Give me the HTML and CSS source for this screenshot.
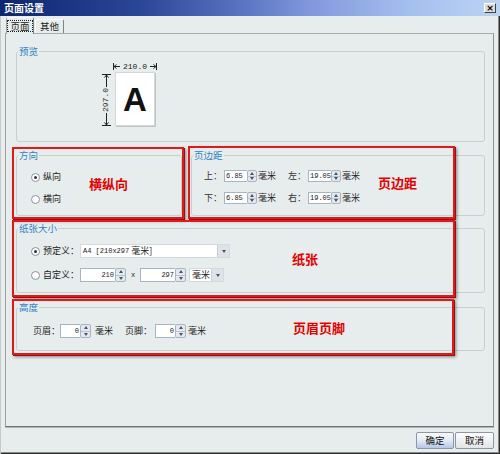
FILE: index.html
```html
<!DOCTYPE html>
<html lang="zh-CN">
<head>
<meta charset="utf-8">
<title>页面设置</title>
<link rel="stylesheet" href="styles.css">
</head>
<body>
<div class="window">
  <div class="titlebar">
    <span class="title">页面设置</span>
    <span class="close">×</span>
  </div>
  <div class="tabs">
    <div class="tab active"><span class="focus">页面</span></div>
    <div class="tab">其他</div>
  </div>
  <div class="panel">
    <fieldset class="group g-preview">
      <legend>预览</legend>
      <div class="preview">
        <div class="wlabel">
          <svg width="7" height="7" viewBox="0 0 7 7"><path d="M0.5 0V7M1 3.5H7M1 3.5L3.5 1.5M1 3.5L3.5 5.5" stroke="#222" fill="none"/></svg>
          <span class="dim">210.0</span>
          <svg width="7" height="7" viewBox="0 0 7 7"><path d="M6.5 0V7M6 3.5H0M6 3.5L3.5 1.5M6 3.5L3.5 5.5" stroke="#222" fill="none"/></svg>
        </div>
        <div class="hlabel">
          <svg width="9" height="7" viewBox="0 0 9 7"><path d="M0 0.5H9M4.5 1V7M4.5 1L2.5 3.5M4.5 1L6.5 3.5" stroke="#222" fill="none"/></svg>
          <span class="vline"></span>
          <span class="vdim">297.0</span>
          <span class="vline"></span>
          <svg width="9" height="7" viewBox="0 0 9 7"><path d="M0 6.5H9M4.5 6V0M4.5 6L2.5 3.5M4.5 6L6.5 3.5" stroke="#222" fill="none"/></svg>
        </div>
        <div class="page">A</div>
      </div>
    </fieldset>

    <div class="split">
      <fieldset class="group g-dir">
        <legend>方向</legend>
        <div class="body dir-body">
          <div class="opt"><span class="radio on"></span><span class="otext">纵向</span></div>
          <div class="opt"><span class="radio"></span><span class="otext">横向</span></div>
        </div>
      </fieldset>
      <fieldset class="group g-margin">
        <legend>页边距</legend>
        <div class="body margin-body">
          <div class="mrow">
            <span class="lbl">上：</span>
            <span class="spin"><span class="field">6.85</span><span class="arrows"><i class="up"></i><i class="down"></i></span></span>
            <span class="unit">毫米</span>
            <span class="lbl lbl2">左：</span>
            <span class="spin"><span class="field">19.05</span><span class="arrows"><i class="up"></i><i class="down"></i></span></span>
            <span class="unit">毫米</span>
          </div>
          <div class="mrow">
            <span class="lbl">下：</span>
            <span class="spin"><span class="field">6.85</span><span class="arrows"><i class="up"></i><i class="down"></i></span></span>
            <span class="unit">毫米</span>
            <span class="lbl lbl2">右：</span>
            <span class="spin"><span class="field">19.05</span><span class="arrows"><i class="up"></i><i class="down"></i></span></span>
            <span class="unit">毫米</span>
          </div>
        </div>
      </fieldset>
    </div>

    <fieldset class="group g-paper">
      <legend>纸张大小</legend>
      <div class="body paper-body">
        <div class="prow">
          <span class="radio on"></span><span class="plbl">预定义：</span>
          <span class="select wide"><span class="val"><span class="mono">A4 [210x297</span> 毫米]</span><span class="sbtn"></span></span>
        </div>
        <div class="prow">
          <span class="radio"></span><span class="plbl">自定义：</span>
          <span class="spin tall"><span class="field right w35">210</span><span class="arrows"><i class="up"></i><i class="down"></i></span></span>
          <span class="times">x</span>
          <span class="spin tall"><span class="field right w35">297</span><span class="arrows"><i class="up"></i><i class="down"></i></span></span>
          <span class="select small"><span class="val">毫米</span><span class="sbtn"></span></span>
        </div>
      </div>
    </fieldset>

    <fieldset class="group g-head">
      <legend>高度</legend>
      <div class="body head-body">
        <div class="hrow">
          <span class="hlbl">页眉：</span>
          <span class="spin tall"><span class="field right w20">0</span><span class="arrows"><i class="up"></i><i class="down"></i></span></span>
          <span class="unit hunit">毫米</span>
          <span class="hlbl hlbl2">页脚：</span>
          <span class="spin tall"><span class="field right w20">0</span><span class="arrows"><i class="up"></i><i class="down"></i></span></span>
          <span class="unit hunit2">毫米</span>
        </div>
      </div>
    </fieldset>
  </div>

  <div class="buttons">
    <span class="btn default">确定</span>
    <span class="btn">取消</span>
  </div>

  <div class="mark m-dir"><span>横纵向</span></div>
  <div class="mark m-margin"><span>页边距</span></div>
  <div class="mark m-paper"><span>纸张</span></div>
  <div class="mark m-head"><span>页眉页脚</span></div>
</div>
</body>
</html>
```

FILE: styles.css
```css
* { box-sizing: border-box; }
html, body { margin: 0; padding: 0; }
body {
  width: 500px;
  height: 454px;
  overflow: hidden;
  font-family: "Noto Sans CJK SC", "Noto Sans", sans-serif;
  font-size: 9px;
  line-height: 12px;
  color: #222;
  background: #e7eded;
}
span, legend { white-space: nowrap; }
.window {
  position: relative;
  width: 500px;
  height: 454px;
  display: flex;
  flex-direction: column;
  background: #e7eded;
  box-shadow: inset 1px 0 #c4caca, inset -1px -1px #2c2c2c, inset -2px -2px #8a8a8a;
}

/* title bar */
.titlebar {
  height: 16px;
  flex: none;
  display: flex;
  align-items: center;
  justify-content: space-between;
  padding: 0 4px 0 4px;
  background: linear-gradient(to right, #0c2670 0%, #2a4696 28%, #5d78c4 50%, #8098dc 62%, #a4c0ee 82%, #bcd4f2 100%);
}
.title {
  color: #fff;
  font-weight: bold;
  font-size: 10px;
  line-height: 12px;
}
.close {
  width: 12px;
  height: 10px;
  background: #dcdcdc;
  border: 1px solid;
  border-color: #fff #404040 #404040 #fff;
  font: bold 9px/8px "DejaVu Sans", sans-serif;
  text-align: center;
  color: #000;
}

/* tabs */
.tabs {
  height: 17px;
  flex: none;
  display: flex;
  align-items: flex-end;
  padding-left: 6px;
  position: relative;
  z-index: 1;
}
.tab {
  width: 29px;
  height: 14px;
  display: flex;
  align-items: center;
  justify-content: center;
  background: #e7eded;
  border: 1px solid;
  border-color: #fafafa #7c8484 transparent #fafafa;
  border-bottom: none;
  border-radius: 2px 2px 0 0;
  font-size: 9.5px;
  line-height: 11px;
}
.tab.active {
  width: 28px;
  height: 17px;
  margin-bottom: -1px;
  margin-right: 1px;
  border-color: #fafafa #7c8484 transparent #9aa4a4;
}
.focus {
  border: 1px dotted #222;
  padding: 0 2px;
  line-height: 10px;
}

/* main panel */
.panel {
  flex: none;
  height: 394px;
  margin: 0 6px 0 5px;
  border: 1px solid;
  border-color: #a4aeae #8a9292 #6e7474 #9aa4a4;
  box-shadow: 0 1px 0 #b0b6b6;
  padding: 0 8px 0 10px;
}

/* groups */
fieldset.group {
  margin: 0;
  padding: 0;
  min-width: 0;
  border: 1px solid #c6d0d0;
  border-radius: 3px;
}
legend {
  margin-left: 1px;
  padding: 0 1px;
  font-size: 9.5px;
  line-height: 12px;
  color: #2f82c8;
}
.g-preview { margin-top: 11px !important; height: 97px; }
.split {
  display: flex;
  gap: 9px;
  margin-top: 7px;
}
.g-dir { width: 166px; height: 67px; flex: none; }
.g-margin { flex: 1; height: 67px; }
.g-paper { margin-top: 6px !important; height: 71px; }
.g-head { margin-top: 8px !important; height: 50px; }

/* preview */
.preview {
  display: grid;
  grid-template-columns: 10px 40px;
  grid-template-rows: 9px 54px;
  column-gap: 4px;
  padding: 6px 0 0 84px;
}
.wlabel {
  grid-column: 2;
  grid-row: 1;
  margin: 0 -2px;
  height: 7px;
  display: flex;
  align-items: center;
  justify-content: space-between;
}
.dim {
  font: 8px/7px "Liberation Mono", monospace;
  color: #222;
}
.hlabel {
  grid-column: 1;
  grid-row: 2;
  display: flex;
  flex-direction: column;
  align-items: center;
  padding-top: 2px;
}
.vline {
  flex: 1;
  width: 1px;
  background: #222;
}
.vdim {
  writing-mode: vertical-rl;
  transform: rotate(180deg);
  font: 8px/8px "Liberation Mono", monospace;
  color: #222;
  padding: 1px 0;
}
.page {
  grid-column: 2;
  grid-row: 2;
  width: 40px;
  height: 54px;
  background: #fff;
  border: 1px solid #d4d8d8;
  box-shadow: 1px 1px 0 #bfc4c4;
  display: flex;
  align-items: center;
  justify-content: center;
  font: bold 33px/1 "Liberation Sans", Arial, sans-serif;
  color: #111;
}

/* direction */
.dir-body {
  padding: 10px 0 0 14px;
  display: flex;
  flex-direction: column;
  gap: 10px;
}
.opt {
  display: flex;
  align-items: center;
  height: 12px;
  gap: 3px;
}
.radio {
  width: 9px;
  height: 9px;
  flex: none;
  border-radius: 50%;
  border: 1px solid #8494a4;
  background: #fff;
  display: flex;
  align-items: center;
  justify-content: center;
}
.radio.on::after {
  content: "";
  width: 3px;
  height: 3px;
  border-radius: 50%;
  background: #333;
}

/* spin boxes */
.spin {
  display: flex;
  height: 12px;
  flex: none;
}
.spin.tall { height: 14px; }
.field {
  width: 23px;
  background: #fff;
  border: 1px solid #a6b6c6;
  border-right: none;
  padding: 0 1px;
  overflow: hidden;
  white-space: nowrap;
  display: flex;
  align-items: center;
  font: 7px/1 "Liberation Mono", monospace;
  color: #222;
}
.field.right { justify-content: flex-end; }
.field.w35 { width: 35px; }
.field.w20 { width: 20px; }
.arrows {
  width: 10px;
  display: flex;
  flex-direction: column;
  border: 1px solid #a6b6c6;
  border-radius: 2px;
  background: #e2e8ee;
}
.spin.tall .arrows { width: 11px; }
.arrows i {
  flex: 1;
  display: flex;
  align-items: center;
  justify-content: center;
}
.arrows i + i { border-top: 1px solid #b8c4d0; }
.arrows .up::before {
  content: "";
  border-left: 2.5px solid transparent;
  border-right: 2.5px solid transparent;
  border-bottom: 3px solid #4a5460;
}
.arrows .down::before {
  content: "";
  border-left: 2.5px solid transparent;
  border-right: 2.5px solid transparent;
  border-top: 3px solid #4a5460;
}

/* margins */
.margin-body {
  padding: 9px 0 0 12px;
  display: flex;
  flex-direction: column;
  gap: 10px;
}
.mrow {
  display: flex;
  align-items: center;
  height: 12px;
}
.lbl { width: 20px; color: #333; }
.lbl2 { margin-left: 12px; }
.unit { width: 18px; margin-left: 1px; }

/* paper */
.paper-body {
  padding: 10px 0 0 14px;
  display: flex;
  flex-direction: column;
  gap: 10px;
}
.prow {
  display: flex;
  align-items: center;
  height: 14px;
}
.plbl { width: 37px; margin-left: 3px; }
.select {
  display: flex;
  height: 14px;
  background: #fff;
  border: 1px solid #d2dae0;
}
.select.wide { width: 150px; }
.select.small { width: 35px; margin-left: 3px; }
.select .val {
  flex: 1;
  padding-left: 2px;
  display: flex;
  align-items: center;
  white-space: nowrap;
  overflow: hidden;
  color: #222;
}
.mono {
  font: 7px/1 "Liberation Mono", monospace;
  margin-right: 2px;
}
.sbtn {
  width: 12px;
  flex: none;
  background: #dde3e8;
  border-left: 1px solid #c8d0d8;
  display: flex;
  align-items: center;
  justify-content: center;
}
.sbtn::after {
  content: "";
  border-left: 2.5px solid transparent;
  border-right: 2.5px solid transparent;
  border-top: 3px solid #4a5460;
}
.times {
  width: 6px;
  margin: 0 4px;
  font: 7px/1 "Liberation Mono", monospace;
  text-align: center;
}

/* header / footer */
.head-body { padding: 11px 0 0 16px; }
.hrow {
  display: flex;
  align-items: center;
  height: 14px;
}
.hlbl { width: 27px; }
.hlbl2 { width: 30px; margin-left: 12px; }
.hunit { margin-left: 4px; }
.hunit2 { margin-left: 2px; }

/* buttons */
.buttons {
  flex: none;
  display: flex;
  justify-content: flex-end;
  gap: 1px;
  margin-top: 5px;
  padding-right: 6px;
}
.btn {
  width: 39px;
  height: 17px;
  border: 1px solid #8c98a4;
  border-radius: 2px;
  background: linear-gradient(#fdfdfd, #e2e4e6);
  text-align: center;
  font-size: 9.5px;
  line-height: 15px;
  color: #111;
}
.btn.default {
  width: 38px;
  background: linear-gradient(#f6f8fa 0%, #e6edf6 45%, #b4c8e6 100%);
}

/* red annotation overlays */
.mark {
  position: absolute;
  border: 2px solid #e01a1a;
  box-shadow: 1px 1px 0 #9a1010, 2px 2px 3px rgba(0, 0, 0, 0.45);
  display: flex;
  align-items: center;
  font-size: 13px;
  line-height: 15px;
  font-weight: bold;
  color: #e60000;
  pointer-events: none;
}
.m-dir { left: 12px; top: 147px; width: 172px; height: 72px; padding-left: 75px; }
.m-margin { left: 188px; top: 146px; width: 267px; height: 73px; padding-left: 188px; }
.m-paper { left: 12px; top: 220px; width: 443px; height: 77px; padding-left: 278px; }
.m-head { left: 12px; top: 299px; width: 442px; height: 56px; padding-left: 279px; }
```
